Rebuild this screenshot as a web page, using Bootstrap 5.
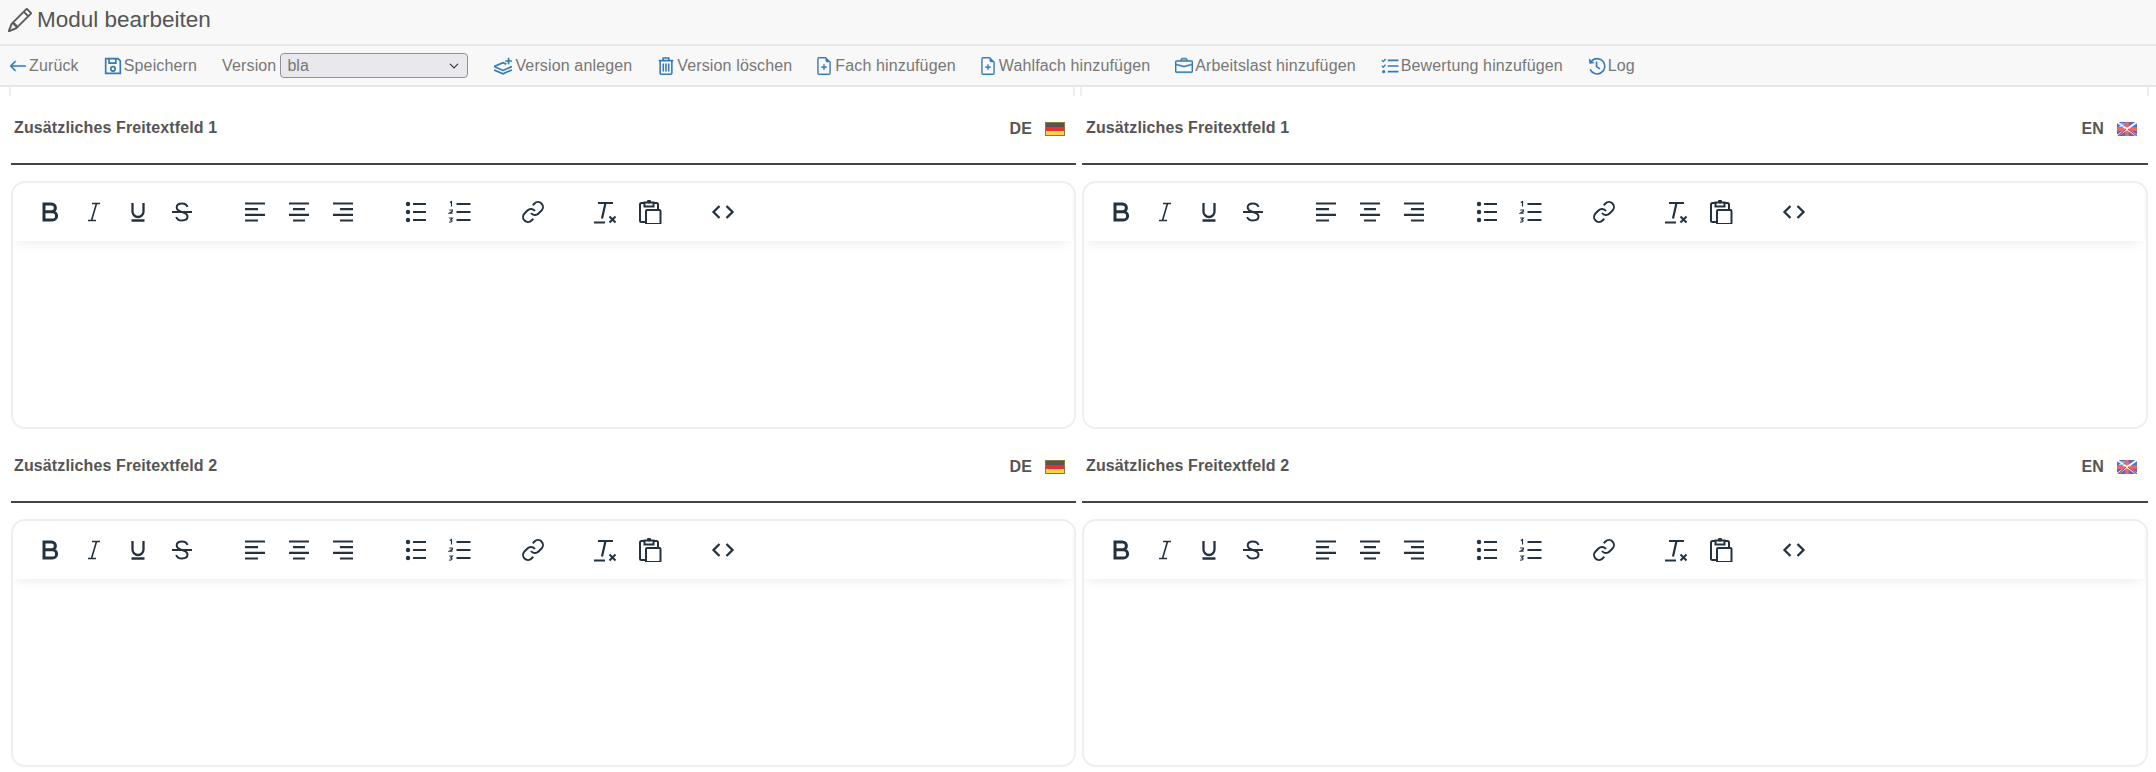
<!DOCTYPE html>
<html lang="de"><head><meta charset="utf-8"><title>Modul bearbeiten</title>
<link href="https://cdn.jsdelivr.net/npm/bootstrap@5.3.0/dist/css/bootstrap.min.css" rel="stylesheet">
<style>
body{font-family:"Liberation Sans",Arial,sans-serif;background:#fff;color:#555;overflow:hidden}
.page-head{height:46px;background:#f8f8f8;border-bottom:2px solid #e7e7e7;padding:0 0 5px 8px;font-size:22.500px;color:#555;gap:5px}
.page-head svg{width:24px;height:24px;color:#555}
.tool-bar{height:41px;background:#f8f8f8;border-bottom:2px solid #e7e7e7;padding-left:9px;font-size:16px;color:#777;gap:25px;letter-spacing:.14px}
.tool-item{display:flex;align-items:center;gap:2px;color:#777;text-decoration:none;white-space:nowrap;margin:0}
.tool-item svg{width:18px;height:18px;color:#337ab7;flex:none}
.tool-item svg.wide-ico{width:20px}
.tool-item svg.file-ico{width:14px;margin-right:2px}
.ver-select{width:188px;height:25px;margin-left:2px;padding:0 6px;background-color:#e9e9ed;border:1px solid #8f8f9d;border-radius:4px;font-size:16px;color:#777;background-position:right 7px center;background-size:12px 10px}
.edit-grid{display:grid;grid-template-columns:1065px 1066px;column-gap:6px;padding:0 0 0 11px}
.field-head{height:78px;border-bottom:2px solid #444;padding:5px 11px 0 3px;font-weight:700;font-size:16px;color:#555;position:relative;letter-spacing:.12px}
.field-two{height:74px;padding-top:2px}
.field-one::before,.field-one::after{content:"";position:absolute;top:0;width:2px;height:9px;background:#eee}
.field-left::before{left:-2px}
.field-left::after{right:1px}
.field-right::before{left:-2px}
.field-right::after{right:-1px}
.col-right-head{padding-left:4px}
.lang-tag{font-size:16px;gap:13px;padding-top:2px}
.lang-tag svg{width:20px;height:14px}
.editor-box{height:248px;margin-top:16px;border:2px solid #efefef;border-radius:14px;overflow:hidden}
.editor-bar{height:58px;display:flex;align-items:center;padding:0 0 0 21px;box-shadow:0 5px 12px -4px rgba(0,0,0,.09);margin:0 2px 0 0}
.ed-btn{width:32px;height:32px;display:flex;align-items:center;justify-content:center;margin-right:12px;color:#24323f}
.ed-btn svg{width:24px;height:24px;overflow:visible}
.ed-gap{width:29px;flex:none}
</style></head><body>
<svg width="0" height="0" class="d-block" aria-hidden="true"><defs>
<symbol id="ed-b" viewBox="0 0 24 24"><path d="M6 4h7.500a3.800 3.800 0 0 1 0 7.800H6zM6 11.800h8.500a4 4 0 0 1 0 8.200H6z" fill="none" stroke="currentColor" stroke-width="3"/></symbol>
<symbol id="ed-i" viewBox="0 0 24 24"><path d="M10 3.500h8M6 20.500h8M14.500 3.500 9.500 20.500" fill="none" stroke="currentColor" stroke-width="1.600"/></symbol>
<symbol id="ed-u" viewBox="0 0 24 24"><path d="M6.500 3v8.500a5.500 5.500 0 0 0 11 0V3M5.500 20.500h13" fill="none" stroke="currentColor" stroke-width="2.300"/></symbol>
<symbol id="ed-s" viewBox="0 0 24 24"><path d="M17.500 7c-.8-2.300-2.800-3.500-5.500-3.500-3.200 0-5.300 1.600-5.300 4 0 2.400 1.800 3.500 5.300 4.500 3.600 1 5.500 2.200 5.500 4.600 0 2.500-2.200 3.900-5.500 3.900-2.900 0-5-1.100-5.800-3.500M2 12h20" fill="none" stroke="currentColor" stroke-width="2"/></symbol>
<symbol id="ed-al" viewBox="0 0 24 24"><path d="M2 3.500h20M2 9.200h13M2 14.800h20M2 20.500h13" fill="none" stroke="currentColor" stroke-width="2.200"/></symbol>
<symbol id="ed-ac" viewBox="0 0 24 24"><path d="M2 3.500h20M6 9.200h12M2 14.800h20M6 20.500h12" fill="none" stroke="currentColor" stroke-width="2.200"/></symbol>
<symbol id="ed-ar" viewBox="0 0 24 24"><path d="M2 3.500h20M9 9.200h13M2 14.800h20M9 20.500h13" fill="none" stroke="currentColor" stroke-width="2.200"/></symbol>
<symbol id="ed-ul" viewBox="0 0 24 24"><circle cx="4" cy="4" r="2.200" fill="currentColor"/><circle cx="4" cy="12" r="2.200" fill="currentColor"/><circle cx="4" cy="20" r="2.200" fill="currentColor"/><path d="M9 4h13M9 12h13M9 20h13" fill="none" stroke="currentColor" stroke-width="2.200"/></symbol>
<symbol id="ed-ol" viewBox="0 0 24 24"><path d="M8.500 4h14M8.500 12h14M8.500 20h14" fill="none" stroke="currentColor" stroke-width="2.200"/><path d="M1.800 2.500l1.700-1v5M1.200 10h3.200v1.200l-3.200 2h3.400M1.200 18h3.200l-1.600 1.800c1.800 0 1.800 2.700-1.600 2.300" fill="none" stroke="currentColor" stroke-width="1.200"/></symbol>
<symbol id="ed-link" viewBox="0 0 24 24"><path d="M10 13a5 5 0 0 0 7.540.54l3-3a5 5 0 0 0-7.070-7.070l-1.720 1.710M14 11a5 5 0 0 0-7.540-.54l-3 3a5 5 0 0 0 7.070 7.070l1.710-1.710" fill="none" stroke="currentColor" stroke-width="2"/></symbol>
<symbol id="ed-clear" viewBox="0 0 24 24"><path d="M4 3h15M11.500 3 8 18.500M0 22.500h11" fill="none" stroke="currentColor" stroke-width="2.200"/><path d="M15.500 16.500l6 6M21.500 16.500l-6 6" fill="none" stroke="currentColor" stroke-width="2"/></symbol>
<symbol id="ed-paste" viewBox="0 0 24 24"><path d="M6.500 3H3.500A1.500 1.500 0 0 0 2 4.500v16A1.500 1.500 0 0 0 3.500 22H7M15.500 3h3A1.500 1.500 0 0 1 20 4.500V9M6.500 2.500h9v4h-9z" fill="none" stroke="currentColor" stroke-width="2"/><circle cx="11" cy="1.500" r="2" fill="currentColor"/><rect x="8" y="10" width="14.500" height="14" rx="1" fill="#fff" stroke="currentColor" stroke-width="2"/></symbol>
<symbol id="ed-code" viewBox="0 0 24 24"><path d="M8.500 6 2.500 12l6 6M15.500 6l6 6-6 6" fill="none" stroke="currentColor" stroke-width="2.300"/></symbol>
<symbol id="flag-de" viewBox="0 0 20 14"><rect width="20" height="14" fill="#8a7a3a"/><rect x="1" y="1" width="18" height="4" fill="#555"/><rect x="1" y="5" width="18" height="4" fill="#e8302c"/><rect x="1" y="9" width="18" height="4" fill="#f5d44c"/></symbol>
<symbol id="flag-en" viewBox="0 0 20 14"><rect width="20" height="14" fill="#5468d8"/><path d="M10 0v14M0 7h20" stroke="#f06a5a" stroke-width="3.500"/><path d="M0 0l20 14M20 0 0 14" stroke="#fff" stroke-width="2"/><path d="M11 7l9 7M9 7 1 14" stroke="#d83838" stroke-width="1.200"/><path d="M2 2h6M2 4.500h6" stroke="#c6d0f5" stroke-width="1"/></symbol>
<symbol id="file-plus" viewBox="1.700 0 12.600 16"><path fill="currentColor" stroke="currentColor" stroke-width=".3" d="M8 6.500a.5.5 0 0 1 .5.500v1.500H10a.5.5 0 0 1 0 1H8.500V11a.5.5 0 0 1-1 0V9.500H6a.5.5 0 0 1 0-1h1.500V7a.5.5 0 0 1 .5-.5z"/><path fill="currentColor" stroke="currentColor" stroke-width=".3" d="M14 4.500V14a2 2 0 0 1-2 2H4a2 2 0 0 1-2-2V2a2 2 0 0 1 2-2h5.500L14 4.500zm-3 0A1.500 1.500 0 0 1 9.500 3V1H4a1 1 0 0 0-1 1v12a1 1 0 0 0 1 1h8a1 1 0 0 0 1-1V4.500h-2z"/></symbol>
</defs></svg>

<header class="page-head d-flex align-items-center">
<svg viewBox="0 0 16 16" fill="currentColor" stroke="currentColor" stroke-width=".3"><path d="M12.146.146a.5.5 0 0 1 .708 0l3 3a.5.5 0 0 1 0 .708l-10 10a.5.5 0 0 1-.168.11l-5 2a.5.5 0 0 1-.65-.65l2-5a.5.5 0 0 1 .11-.168l10-10zM11.207 2.500 13.500 4.793 14.793 3.500 12.500 1.207 11.207 2.500zm1.586 3L10.500 3.207 4 9.707V10h.5a.5.5 0 0 1 .5.500v.5h.5a.5.5 0 0 1 .5.500v.5h.293l6.500-6.500zm-9.761 5.175-.106.106-1.528 3.821 3.821-1.528.106-.106A.5.500 0 0 1 5 12.500V12h-.5a.5.500 0 0 1-.5-.5V11h-.5a.5.500 0 0 1-.468-.325z"/></svg>
<span>Modul bearbeiten</span></header>

<nav class="tool-bar d-flex align-items-center">
<a class="tool-item" href="#"><svg viewBox="0 0 16 16" fill="currentColor"><path fill-rule="evenodd" d="M15 8a.5.5 0 0 0-.5-.5H2.707l3.147-3.146a.5.5 0 1 0-.708-.708l-4 4a.5.5 0 0 0 0 .708l4 4a.5.5 0 0 0 .708-.708L2.707 8.500H14.500A.5.5 0 0 0 15 8z" stroke="currentColor" stroke-width=".5"/></svg>Zurück</a>
<a class="tool-item" href="#"><svg viewBox="0 0 16 16" fill="none" stroke="currentColor" stroke-width="1.500"><path d="M1.500 1.500h11l2 2v11h-13zM4.500 1.500v4h6v-4"/><circle cx="8" cy="10.500" r="2"/></svg>Speichern</a>
<label class="tool-item">Version<select class="form-select ver-select" aria-label="Version"><option>bla</option></select></label>
<a class="tool-item" href="#"><svg class="wide-ico" viewBox="0 0 18 16" fill="none" stroke="currentColor" stroke-width="1.500"><path d="M1 8.500 9 5l3 1.300M17 8.500 9 12 1 8.500M1 11.500 9 15l8-3.500"/><path d="M14 .5v6M11 3.500h6"/></svg>Version anlegen</a>
<a class="tool-item" href="#"><svg viewBox="0 0 16 16" fill="none" stroke="currentColor" stroke-width="1.400"><path d="M1.500 3.200h13M5.500 3.200V.9h5v2.300M2.800 3.200v11.100a1 1 0 0 0 1 1h8.400a1 1 0 0 0 1-1V3.200M5.600 5.800v7M8 5.800v7M10.400 5.800v7"/></svg>Version löschen</a>
<a class="tool-item" href="#"><svg class="file-ico"><use href="#file-plus"/></svg>Fach hinzufügen</a>
<a class="tool-item" href="#"><svg class="file-ico"><use href="#file-plus"/></svg>Wahlfach hinzufügen</a>
<a class="tool-item" href="#"><svg viewBox="0 0 16 16" fill="currentColor" stroke="currentColor" stroke-width=".5"><path d="M6.500 1A1.500 1.500 0 0 0 5 2.500V3H1.500A1.500 1.500 0 0 0 0 4.500v8A1.500 1.500 0 0 0 1.500 14h13a1.500 1.500 0 0 0 1.500-1.500v-8A1.500 1.500 0 0 0 14.500 3H11v-.5A1.500 1.500 0 0 0 9.500 1h-3zm0 1h3a.5.5 0 0 1 .5.500V3H6v-.5a.5.5 0 0 1 .5-.5zm1.886 6.914L15 7.151V12.500a.5.5 0 0 1-.5.5h-13a.5.5 0 0 1-.5-.5V7.150l6.614 1.764a1.500 1.500 0 0 0 .772 0zM1.500 4h13a.5.5 0 0 1 .5.500v1.616L8.129 7.948a.5.5 0 0 1-.258 0L1 6.116V4.500a.5.5 0 0 1 .5-.5z"/></svg>Arbeitslast hinzufügen</a>
<a class="tool-item" href="#"><svg viewBox="0 0 16 16" fill="none" stroke="currentColor"><path d="M6 3h9.500M6 8h9.500M6 13h9.500" stroke-width="1.400"/><path d="M.8 2.800l1.300 1.300L4 1.800M.8 7.800l1.300 1.300L4 6.800" stroke-width="1.200"/><circle cx="2.400" cy="13" r="1.400" fill="currentColor" stroke="none"/></svg>Bewertung hinzufügen</a>
<a class="tool-item" href="#"><svg viewBox="0 0 16 16" fill="none" stroke="currentColor" stroke-width="1.400"><path d="M3.300 3.400A6.800 6.800 0 1 1 1.900 11"/><path d="M.8 1.200l.4 4.700 4.600-.4z" fill="currentColor" stroke="none"/><path d="M7.600 4v4.600l3 2"/></svg>Log</a>
</nav>

<main class="edit-grid">
<section>
<div class="field-head field-one field-left d-flex justify-content-between align-items-center"><span>Zusätzliches Freitextfeld 1</span><span class="lang-tag d-flex align-items-center">DE<svg><use href="#flag-de"/></svg></span></div>
<div class="editor-box"><div class="editor-bar">
<span class="ed-btn"><svg><use href="#ed-b"/></svg></span><span class="ed-btn"><svg><use href="#ed-i"/></svg></span><span class="ed-btn"><svg><use href="#ed-u"/></svg></span><span class="ed-btn"><svg><use href="#ed-s"/></svg></span><span class="ed-gap"></span>
<span class="ed-btn"><svg><use href="#ed-al"/></svg></span><span class="ed-btn"><svg><use href="#ed-ac"/></svg></span><span class="ed-btn"><svg><use href="#ed-ar"/></svg></span><span class="ed-gap"></span>
<span class="ed-btn"><svg><use href="#ed-ul"/></svg></span><span class="ed-btn"><svg><use href="#ed-ol"/></svg></span><span class="ed-gap"></span>
<span class="ed-btn"><svg><use href="#ed-link"/></svg></span><span class="ed-gap"></span>
<span class="ed-btn"><svg><use href="#ed-clear"/></svg></span><span class="ed-btn"><svg><use href="#ed-paste"/></svg></span><span class="ed-gap"></span>
<span class="ed-btn"><svg><use href="#ed-code"/></svg></span>
</div></div>
</section>
<section>
<div class="field-head field-one field-right col-right-head d-flex justify-content-between align-items-center"><span>Zusätzliches Freitextfeld 1</span><span class="lang-tag d-flex align-items-center">EN<svg><use href="#flag-en"/></svg></span></div>
<div class="editor-box"><div class="editor-bar">
<span class="ed-btn"><svg><use href="#ed-b"/></svg></span><span class="ed-btn"><svg><use href="#ed-i"/></svg></span><span class="ed-btn"><svg><use href="#ed-u"/></svg></span><span class="ed-btn"><svg><use href="#ed-s"/></svg></span><span class="ed-gap"></span>
<span class="ed-btn"><svg><use href="#ed-al"/></svg></span><span class="ed-btn"><svg><use href="#ed-ac"/></svg></span><span class="ed-btn"><svg><use href="#ed-ar"/></svg></span><span class="ed-gap"></span>
<span class="ed-btn"><svg><use href="#ed-ul"/></svg></span><span class="ed-btn"><svg><use href="#ed-ol"/></svg></span><span class="ed-gap"></span>
<span class="ed-btn"><svg><use href="#ed-link"/></svg></span><span class="ed-gap"></span>
<span class="ed-btn"><svg><use href="#ed-clear"/></svg></span><span class="ed-btn"><svg><use href="#ed-paste"/></svg></span><span class="ed-gap"></span>
<span class="ed-btn"><svg><use href="#ed-code"/></svg></span>
</div></div>
</section>
<section>
<div class="field-head field-two d-flex justify-content-between align-items-center"><span>Zusätzliches Freitextfeld 2</span><span class="lang-tag d-flex align-items-center">DE<svg><use href="#flag-de"/></svg></span></div>
<div class="editor-box"><div class="editor-bar">
<span class="ed-btn"><svg><use href="#ed-b"/></svg></span><span class="ed-btn"><svg><use href="#ed-i"/></svg></span><span class="ed-btn"><svg><use href="#ed-u"/></svg></span><span class="ed-btn"><svg><use href="#ed-s"/></svg></span><span class="ed-gap"></span>
<span class="ed-btn"><svg><use href="#ed-al"/></svg></span><span class="ed-btn"><svg><use href="#ed-ac"/></svg></span><span class="ed-btn"><svg><use href="#ed-ar"/></svg></span><span class="ed-gap"></span>
<span class="ed-btn"><svg><use href="#ed-ul"/></svg></span><span class="ed-btn"><svg><use href="#ed-ol"/></svg></span><span class="ed-gap"></span>
<span class="ed-btn"><svg><use href="#ed-link"/></svg></span><span class="ed-gap"></span>
<span class="ed-btn"><svg><use href="#ed-clear"/></svg></span><span class="ed-btn"><svg><use href="#ed-paste"/></svg></span><span class="ed-gap"></span>
<span class="ed-btn"><svg><use href="#ed-code"/></svg></span>
</div></div>
</section>
<section>
<div class="field-head field-two col-right-head d-flex justify-content-between align-items-center"><span>Zusätzliches Freitextfeld 2</span><span class="lang-tag d-flex align-items-center">EN<svg><use href="#flag-en"/></svg></span></div>
<div class="editor-box"><div class="editor-bar">
<span class="ed-btn"><svg><use href="#ed-b"/></svg></span><span class="ed-btn"><svg><use href="#ed-i"/></svg></span><span class="ed-btn"><svg><use href="#ed-u"/></svg></span><span class="ed-btn"><svg><use href="#ed-s"/></svg></span><span class="ed-gap"></span>
<span class="ed-btn"><svg><use href="#ed-al"/></svg></span><span class="ed-btn"><svg><use href="#ed-ac"/></svg></span><span class="ed-btn"><svg><use href="#ed-ar"/></svg></span><span class="ed-gap"></span>
<span class="ed-btn"><svg><use href="#ed-ul"/></svg></span><span class="ed-btn"><svg><use href="#ed-ol"/></svg></span><span class="ed-gap"></span>
<span class="ed-btn"><svg><use href="#ed-link"/></svg></span><span class="ed-gap"></span>
<span class="ed-btn"><svg><use href="#ed-clear"/></svg></span><span class="ed-btn"><svg><use href="#ed-paste"/></svg></span><span class="ed-gap"></span>
<span class="ed-btn"><svg><use href="#ed-code"/></svg></span>
</div></div>
</section>
</main>
</body></html>
